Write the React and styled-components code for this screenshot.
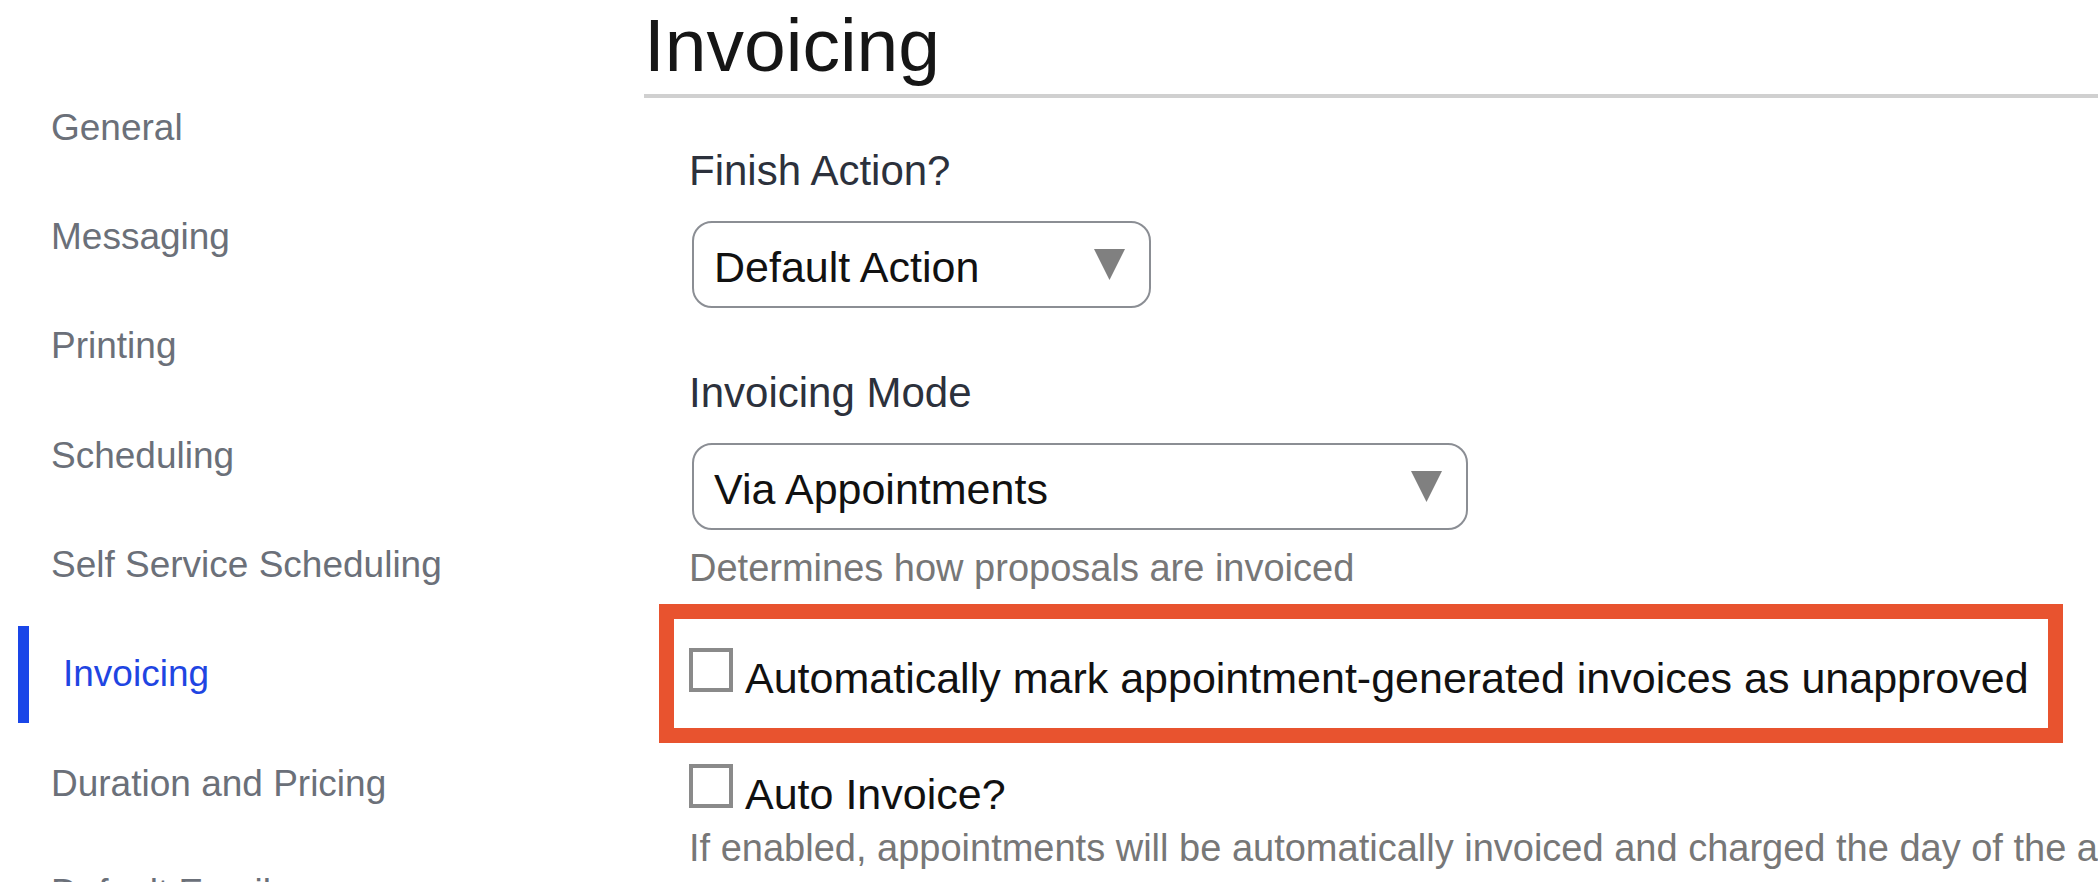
import React from "react";
import styled, { createGlobalStyle } from "styled-components";

const GlobalStyle = createGlobalStyle`
  html, body {
    margin: 0;
    padding: 0;
    background: #fff;
    overflow: hidden;
  }
  body {
    font-family: "Liberation Sans", Arial, sans-serif;
  }
  * {
    box-sizing: border-box;
  }
`;

const Page = styled.div`
  display: flex;
  width: 2098px;
  height: 882px;
  overflow: hidden;
`;

const Sidebar = styled.nav`
  width: 644px;
  flex-shrink: 0;
  padding: 79px 0 0 18px;
  display: flex;
  flex-direction: column;
  gap: 12.4px;
`;

const NavItem = styled.div`
  height: 97px;
  flex-shrink: 0;
  display: flex;
  align-items: center;
  font-size: 37px;
  color: ${(p) => (p.$active ? "#1f45e2" : "#6b7079")};
  padding-left: ${(p) => (p.$active ? "34px" : "33px")};
  border-left: ${(p) => (p.$active ? "11px solid #1a46e8" : "none")};
  white-space: nowrap;
`;

const Main = styled.main`
  flex: 1;
  min-width: 0;
`;

const Title = styled.h1`
  margin: 0;
  padding: 8px 0 11px 0;
  font-size: 75px;
  line-height: 75px;
  font-weight: 400;
  color: #161616;
  border-bottom: 4px solid #d0d0d0;
`;

const Form = styled.div`
  padding-left: 45px;
  display: flex;
  flex-direction: column;
  align-items: flex-start;
`;

const Label = styled.div`
  font-size: 42px;
  line-height: 50px;
  color: #2c313c;
  margin-top: ${(p) => p.$top}px;
`;

const Select = styled.div`
  margin: 25px 0 0 3px;
  width: ${(p) => p.$width}px;
  height: 87px;
  border: 2px solid #8b8e94;
  border-radius: 20px;
  display: flex;
  align-items: center;
  justify-content: space-between;
  padding: 4px 24px 0 20px;
  font-size: 43px;
  line-height: 52px;
  color: #111;
`;

const Arrow = styled.svg`
  width: 31px;
  height: 31px;
  margin-top: -4px;
  flex-shrink: 0;
`;

const Help = styled.div`
  font-size: 38px;
  line-height: 46px;
  color: #777;
  margin-top: ${(p) => p.$top}px;
  white-space: nowrap;
`;

const Highlight = styled.div`
  align-self: stretch;
  margin: 13px 35px 0 -30px;
  border: 15px solid #e8532f;
  padding: 29px 15px 24px 15px;
`;

const CheckRow = styled.label`
  display: flex;
  align-items: flex-start;
  gap: 12px;
  margin-top: ${(p) => p.$top || 0}px;
`;

const Box = styled.span`
  width: 44px;
  height: 44px;
  border: 4px solid #8a8a8a;
  background: #fff;
  flex-shrink: 0;
`;

const CheckText = styled.span`
  font-size: 43px;
  line-height: 52px;
  color: #111;
  margin-top: 4px;
  white-space: nowrap;
`;

const navItems = [
  "General",
  "Messaging",
  "Printing",
  "Scheduling",
  "Self Service Scheduling",
  "Invoicing",
  "Duration and Pricing",
  "Default Emails",
];

const DropArrow = () => (
  <Arrow viewBox="0 0 31 31">
    <polygon points="0,0 31,0 15.5,31" fill="#808080" />
  </Arrow>
);

const App = () => {
  return (
    <>
      <GlobalStyle />
      <Page>
        <Sidebar>
          {navItems.map((item) => (
            <NavItem key={item} $active={item === "Invoicing"}>
              {item}
            </NavItem>
          ))}
        </Sidebar>

        <Main>
          <Title>Invoicing</Title>
          <Form>
            <Label $top={48}>Finish Action?</Label>
            <Select $width={459}>
              <span>Default Action</span>
              <DropArrow />
            </Select>

            <Label $top={60}>Invoicing Mode</Label>
            <Select $width={776}>
              <span>Via Appointments</span>
              <DropArrow />
            </Select>
            <Help $top={15}>Determines how proposals are invoiced</Help>

            <Highlight>
              <CheckRow>
                <Box />
                <CheckText>Automatically mark appointment-generated invoices as unapproved</CheckText>
              </CheckRow>
            </Highlight>

            <CheckRow $top={21}>
              <Box />
              <CheckText>Auto Invoice?</CheckText>
            </CheckRow>
            <Help $top={5}>
              If enabled, appointments will be automatically invoiced and charged the day of the appointment
            </Help>
          </Form>
        </Main>
      </Page>
    </>
  );
};

export default App;
